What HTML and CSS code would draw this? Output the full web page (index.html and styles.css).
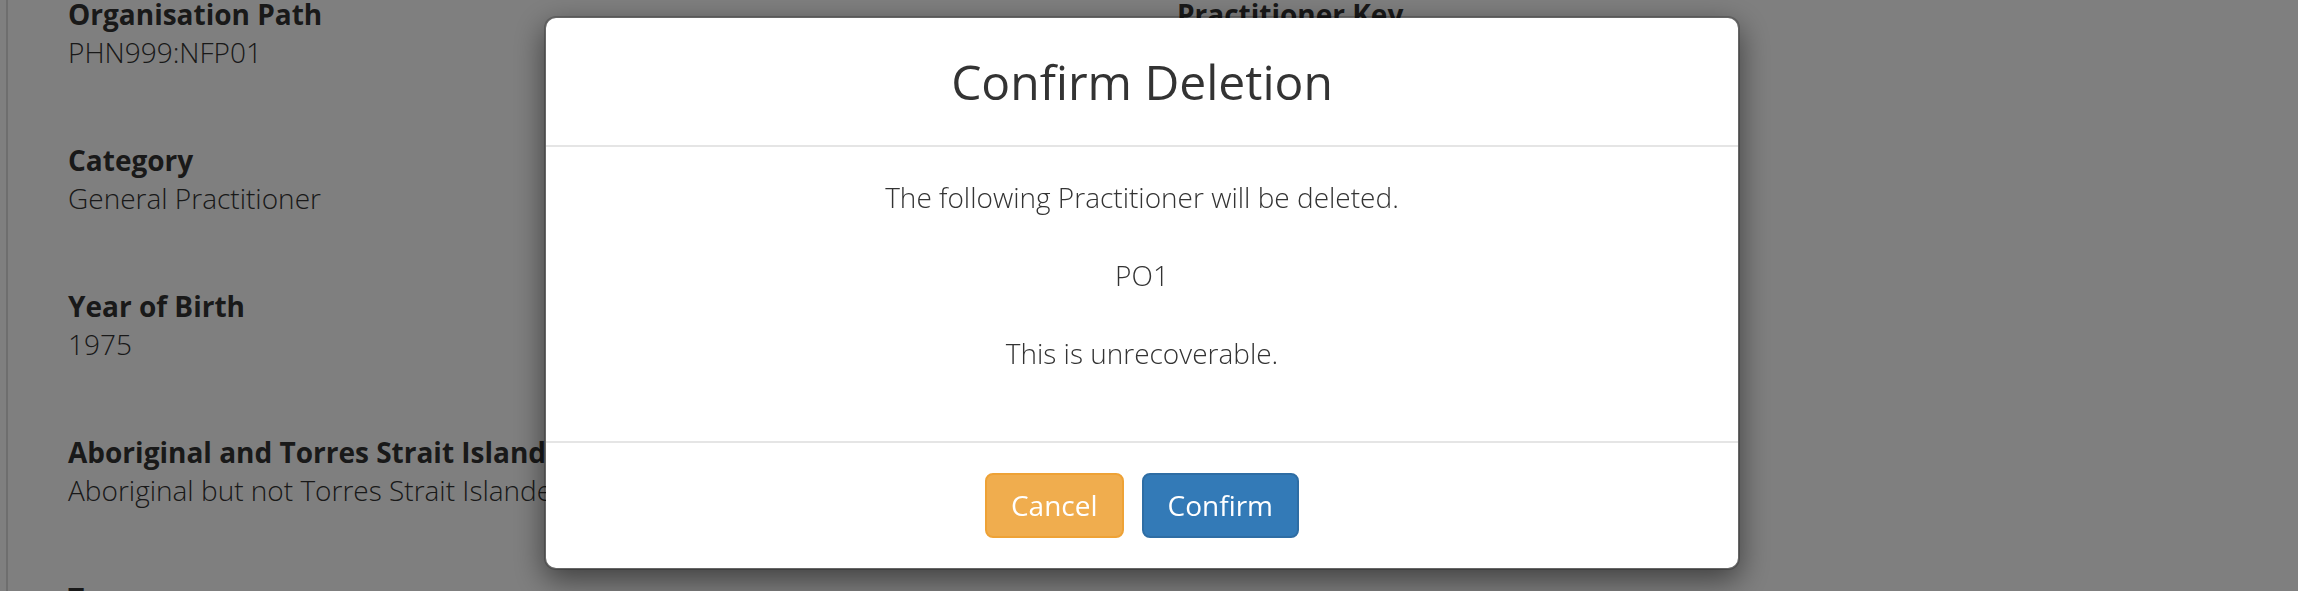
FILE: index.html
```html
<!DOCTYPE html>
<html lang="en">
<head>
<meta charset="utf-8">
<title>Confirm Deletion</title>
<link rel="stylesheet" href="styles.css">
</head>
<body>
<div class="page">
  <div class="panel">
    <div class="col">
      <div class="field">
        <div class="label">Organisation Path</div>
        <div class="value">PHN999:NFP01</div>
      </div>
      <div class="field">
        <div class="label">Category</div>
        <div class="value">General Practitioner</div>
      </div>
      <div class="field">
        <div class="label">Year of Birth</div>
        <div class="value">1975</div>
      </div>
      <div class="field">
        <div class="label">Aboriginal and Torres Strait Islander Status</div>
        <div class="value">Aboriginal but not Torres Strait Islander origin</div>
      </div>
      <div class="field">
        <div class="label">Type</div>
        <div class="value">Active</div>
      </div>
    </div>
    <div class="col">
      <div class="field">
        <div class="label">Practitioner Key</div>
        <div class="value">PO1</div>
      </div>
      <div class="field">
        <div class="label">Gender</div>
        <div class="value">Male</div>
      </div>
      <div class="field">
        <div class="label">Status</div>
        <div class="value">Active</div>
      </div>
    </div>
  </div>
</div>

<div class="backdrop"></div>

<div class="modal">
  <div class="modal-content">
    <div class="modal-header">
      <h3 class="modal-title">Confirm Deletion</h3>
    </div>
    <div class="modal-body">
      <p>The following Practitioner will be deleted.</p>
      <p>PO1</p>
      <p>This is unrecoverable.</p>
    </div>
    <div class="modal-footer">
      <button class="btn btn-warning">Cancel</button>
      <button class="btn btn-primary">Confirm</button>
    </div>
  </div>
</div>
</body>
</html>
```

FILE: styles.css
```css
html, body {
  margin: 0;
  padding: 0;
  height: 100%;
  overflow: hidden;
}

body {
  font-family: "Open Sans", "Liberation Sans", sans-serif;
  font-size: 28px;
  line-height: 38px;
  color: #333333;
  background: #ffffff;
}

.page {
  margin-top: -5px;
}

.panel {
  margin-left: 6px;
  border-left: 2px solid #dddddd;
  padding-left: 60px;
  display: grid;
  grid-template-columns: 1109px 1fr;
  min-height: 700px;
}

.field {
  margin-bottom: 70px;
}

.label {
  font-weight: 700;
}

.value {
  font-weight: 300;
}

.backdrop {
  position: fixed;
  inset: 0;
  background: #000000;
  opacity: 0.5;
}

.modal {
  position: fixed;
  inset: 0;
  display: flex;
  justify-content: center;
  align-items: flex-start;
  padding-top: 16px;
  padding-right: 14px;
}

.modal-content {
  width: 1196px;
  box-sizing: border-box;
  background: #ffffff;
  border: 2px solid rgba(0, 0, 0, 0.2);
  border-radius: 12px;
  box-shadow: 0 10px 30px rgba(0, 0, 0, 0.5);
  background-clip: padding-box;
}

.modal-header {
  padding: 37px 30px;
  border-bottom: 2px solid #e5e5e5;
  text-align: center;
}

.modal-title {
  margin: 0;
  font-size: 48px;
  line-height: 53px;
  font-weight: 400;
  color: #333333;
}

.modal-body {
  padding: 30px;
  text-align: center;
  font-weight: 300;
}

.modal-body p {
  margin: 0 0 38px;
  line-height: 40px;
}

.modal-footer {
  padding: 30px;
  border-top: 2px solid #e5e5e5;
  display: flex;
  justify-content: center;
  gap: 18px;
}

.btn {
  font-family: "Open Sans", "Liberation Sans", sans-serif;
  font-size: 28px;
  line-height: 39px;
  font-weight: 400;
  padding: 11px 24px;
  border: 2px solid transparent;
  border-radius: 8px;
  color: #ffffff;
  cursor: pointer;
}

.btn-warning {
  background: #f0ad4e;
  border-color: #eea236;
}

.btn-primary {
  background: #337ab7;
  border-color: #2e6da4;
}
```
